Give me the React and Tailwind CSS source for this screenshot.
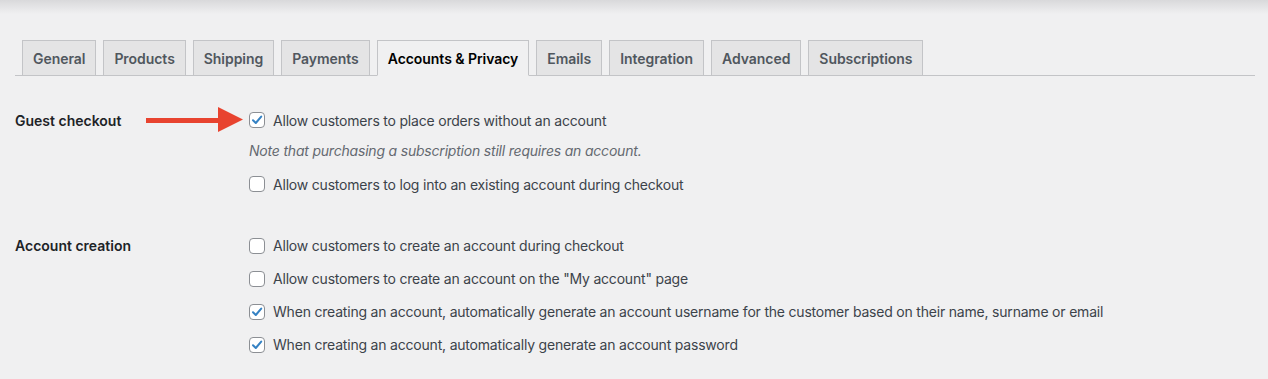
import React from 'react';

const tabs = ['General', 'Products', 'Shipping', 'Payments', 'Accounts & Privacy', 'Emails', 'Integration', 'Advanced', 'Subscriptions'];

const Checkbox = ({ checked }) => (
  <span className="w-4 h-4 shrink-0 rounded-[4px] border border-[#8c8f94] bg-white flex items-center justify-center">
    {checked && (
      <svg width="12" height="12" viewBox="0 0 12 12">
        <path d="M2 6.2 L4.8 9 L10.2 2.6" fill="none" stroke="#3582c4" strokeWidth="2" strokeLinecap="round" strokeLinejoin="round" />
      </svg>
    )}
  </span>
);

const Option = ({ checked, label, className = 'h-[30px]' }) => (
  <div className={`flex items-center gap-2 ${className}`}>
    <Checkbox checked={checked} />
    <span className="text-[14px] tracking-[-0.2px] text-[#3c434a]">{label}</span>
  </div>
);

const App = () => {
  return (
    <div className="w-[1268px] h-[379px] bg-[#f0f0f1] overflow-hidden relative" style={{ fontFamily: 'Inter, "Noto Sans", sans-serif' }}>
      <div className="h-[14px] bg-gradient-to-b from-[#d9d9db] to-[#f0f0f1]"></div>

      <div className="mt-[26px] ml-[15px] mr-[13px] flex border-b border-[#c3c4c7]">
        {tabs.map(t => {
          const active = t === 'Accounts & Privacy';
          return (
            <div
              key={t}
              className={`ml-[7px] -mb-px h-[36px] px-[10px] flex items-center border border-[#c3c4c7] text-[14px] tracking-[-0.05px] font-semibold ${
                active ? 'bg-[#f0f0f1] border-b-[#f0f0f1] text-black' : 'bg-[#e4e4e5] text-[#50575e]'
              }`}
            >
              {t}
            </div>
          );
        })}
      </div>

      <div className="ml-[15px] mt-[29px]">
        <div className="flex relative">
          <div className="w-[234px] h-[30px] flex items-center text-[14px] font-semibold text-[#1d2327]">Guest checkout</div>
          <svg className="absolute left-[131px] top-[2px]" width="97" height="26" viewBox="0 0 97 26">
            <rect x="0" y="11" width="74" height="5" fill="#e8432f" />
            <polygon points="72,0 97,12.5 72,25" fill="#e8432f" />
          </svg>
          <div>
            <Option checked label="Allow customers to place orders without an account" />
            <div className="h-[30px] flex items-center text-[14px] tracking-[-0.2px] italic text-[#646970]">Note that purchasing a subscription still requires an account.</div>
            <Option label="Allow customers to log into an existing account during checkout" className="h-[30px] mt-[4px]" />
          </div>
        </div>

        <div className="flex mt-[30px]">
          <div className="w-[234px] h-[33px] flex items-center text-[14px] font-semibold text-[#1d2327]">Account creation</div>
          <div>
            <Option label="Allow customers to create an account during checkout" className="h-[33px]" />
            <Option label={'Allow customers to create an account on the "My account" page'} className="h-[33px]" />
            <Option checked label="When creating an account, automatically generate an account username for the customer based on their name, surname or email" className="h-[33px]" />
            <Option checked label="When creating an account, automatically generate an account password" className="h-[33px]" />
          </div>
        </div>
      </div>
    </div>
  );
};

export default App;
